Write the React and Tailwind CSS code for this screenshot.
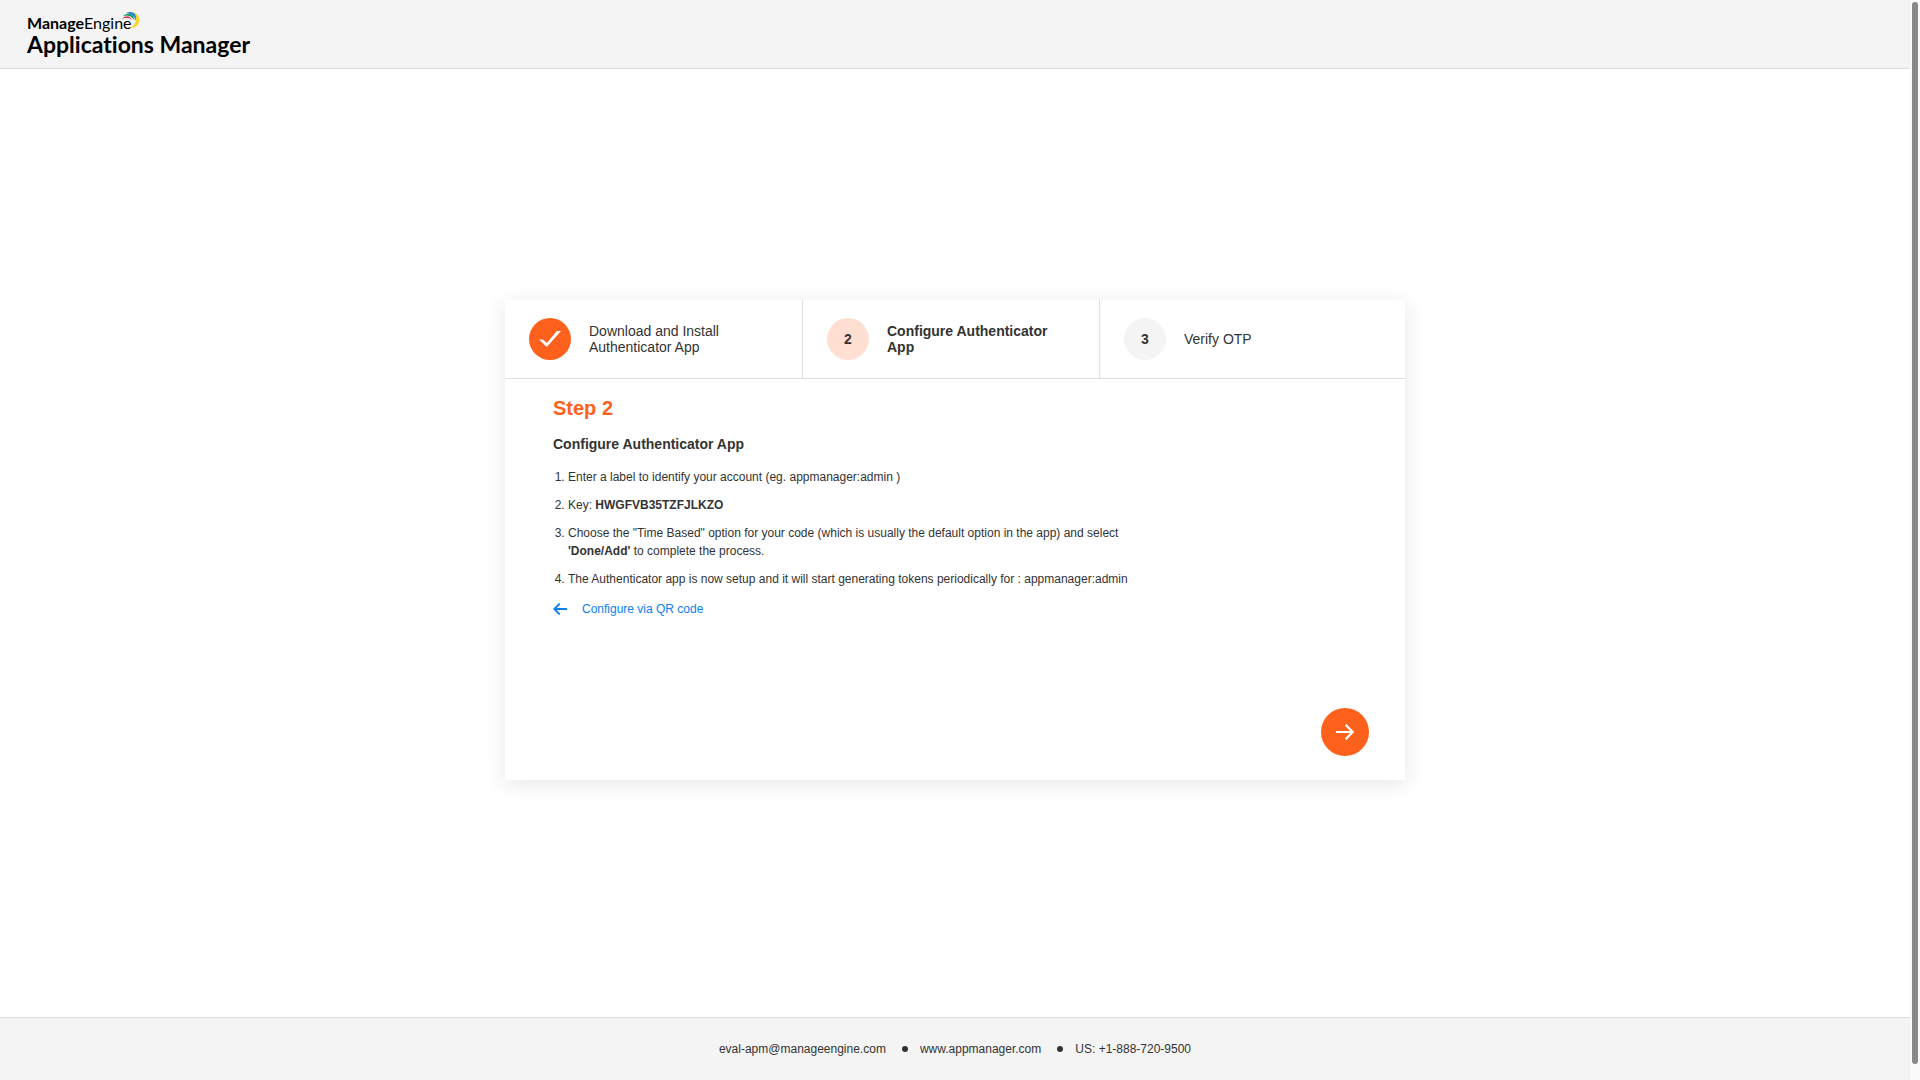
function Logo() {
  return (
    <a
      href="#"
      className="inline-flex flex-col font-[Lato,sans-serif] text-black [font-variant-ligatures:none]"
      aria-label="ManageEngine Applications Manager"
    >
      <span className="flex text-base leading-4">
        <b className="font-bold">Manage</b>Engine
        <svg width="18" height="18" viewBox="0 0 18 18" fill="none" className="-mt-1 -ml-2.5" aria-hidden="true">
          <path d="M0 8C3 4 8 4.500 10 9C7.500 6.300 4 6 0 8Z" fill="#e4203a" />
          <path d="M1 5C6 1 12 3.500 12.500 9.500C10 5 6 3.500 1 5Z" fill="#009a4e" />
          <path d="M4 2C11 -1.500 17 4 14.500 12C13.500 6.500 11 3.300 4 2Z" fill="#1c84c6" />
          <path d="M12 1C20.500 5.500 18.500 17 7.500 17.500C13.500 14.500 16 8 12 1Z" fill="#fdd52a" />
        </svg>
      </span>
      <span className="text-[23px] leading-[26px] font-bold">Applications Manager</span>
    </a>
  );
}

function CheckIcon() {
  return (
    <svg width="22" height="16" viewBox="0 0 22 16" fill="#fff" aria-hidden="true">
      <path d="M0 8.500H4L7.800 12L17.800 0H22L7.800 16Z" />
    </svg>
  );
}

const steps = [
  { id: 1, label: 'Download and Install Authenticator App', state: 'done' },
  { id: 2, label: 'Configure Authenticator App', state: 'active' },
  { id: 3, label: 'Verify OTP', state: 'todo' },
];

const badgeStyles = {
  done: 'bg-[#fd611c]',
  active: 'bg-[#ffdfd2]',
  todo: 'bg-[#f4f4f4]',
};

function Steps() {
  return (
    <ol className="grid grid-cols-[298fr_297fr_305fr] border-b border-[#dedede] text-sm leading-4">
      {steps.map((step) => (
        <li
          key={step.id}
          className="flex items-center gap-[18px] border-r border-[#dedede] px-6 py-[18px] last:border-r-0"
        >
          <span
            className={`flex size-[42px] shrink-0 items-center justify-center rounded-full font-bold ${badgeStyles[step.state]}`}
          >
            {step.state === 'done' ? <CheckIcon /> : step.id}
          </span>
          <span className={step.state === 'active' ? 'font-bold' : ''}>{step.label}</span>
        </li>
      ))}
    </ol>
  );
}

function Dot() {
  return <span className="mr-3 ml-4 size-1.5 rounded-full bg-[#333]" />;
}

export default function App() {
  return (
    <div className="flex min-h-screen bg-white font-['Liberation_Sans',Arial,sans-serif] text-[#333]">
      <div className="flex min-w-0 grow flex-col">
        <header className="h-[69px] border-b border-[#dedede] bg-[#f4f4f4] px-[27px] pt-3">
          <Logo />
        </header>

        <main className="flex grow items-center justify-center pb-1.5">
          <section className="flex min-h-[480px] w-full max-w-[900px] flex-col bg-white shadow-[0_4px_20px_rgba(0,0,0,0.1)]">
            <Steps />
            <div className="flex grow flex-col px-12 pt-[17px] text-xs leading-[18px]">
              <h1 className="text-xl leading-6 font-bold text-[#fd611c]">Step 2</h1>
              <h2 className="mt-4 text-sm leading-4 font-bold">Configure Authenticator App</h2>
              <ol className="mt-4 max-w-[600px] list-decimal space-y-2.5 pl-[15px]">
                <li>Enter a label to identify your account (eg. appmanager:admin )</li>
                <li>
                  Key: <b>HWGFVB35TZFJLKZO</b>
                </li>
                <li>
                  Choose the "Time Based" option for your code (which is usually the default option in the app) and
                  select <b>'Done/Add'</b> to complete the process.
                </li>
                <li>
                  The Authenticator app is now setup and it will start generating tokens periodically for :
                  appmanager:admin
                </li>
              </ol>
              <a href="#" className="mt-3 flex items-center gap-[15px] self-start text-[#0a80f5]">
                <svg width="14" height="12" viewBox="0 0 14 12" fill="none" stroke="currentColor" strokeWidth="1.9" aria-hidden="true">
                  <path d="M14 6H1.200M6.700 .6L1.300 6L6.700 11.400" />
                </svg>
                Configure via QR code
              </a>
            </div>
            <button
              type="button"
              aria-label="Next"
              className="mr-9 mb-6 flex size-12 items-center justify-center self-end rounded-full bg-[#fd611c]"
            >
              <svg width="18" height="16" viewBox="0 0 18 16" fill="none" stroke="#fff" strokeWidth="2.200" aria-hidden="true">
                <path d="M0 8H17M9.500 .7L16.800 8L9.500 15.300" />
              </svg>
            </button>
          </section>
        </main>

        <footer className="flex h-[63px] items-center justify-center border-t border-[#dedede] bg-[#f4f4f4] text-xs">
          <a href="mailto:eval-apm@manageengine.com">eval-apm@manageengine.com</a>
          <Dot />
          <a href="#">www.appmanager.com</a>
          <Dot />
          <span>US: +1-888-720-9500</span>
        </footer>
      </div>

      {/* page scrollbar */}
      <div className="flex w-2.5 shrink-0 flex-col bg-[#fafafa] px-0.5 pt-0.5 pb-4" aria-hidden="true">
        <div className="grow rounded-full bg-[#888]" />
      </div>
    </div>
  );
}
